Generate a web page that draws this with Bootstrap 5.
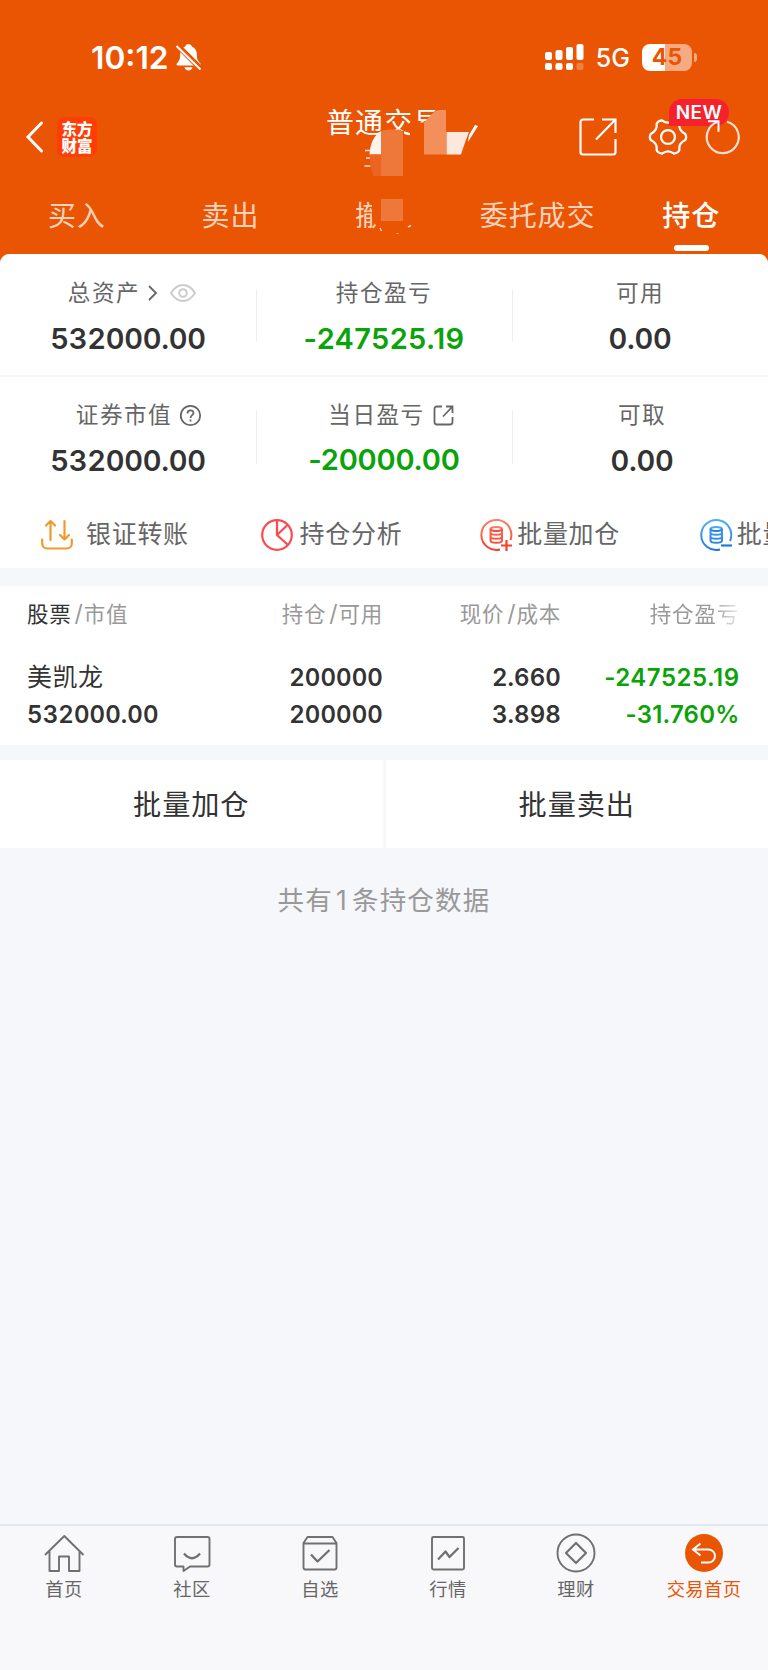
<!DOCTYPE html>
<html lang="zh-CN" data-bs-theme="light">
<head>
<meta charset="utf-8">
<meta name="viewport" content="width=device-width, initial-scale=1">
<title>持仓</title>
<link href="https://cdn.jsdelivr.net/npm/bootstrap@5.3.0/dist/css/bootstrap.min.css" rel="stylesheet">
<style>
:root{--brand:#ea5504;--page:#f6f7fa;--ink:#333;--sub:#666;--dim:#999;--down:#0aa30a}
body{font-family:Inter,"Noto Sans CJK SC",sans-serif;background:var(--page);color:var(--ink);width:768px;height:1670px;overflow:hidden}
svg{display:block;fill:none;flex:none;overflow:visible}
.app-head{background:var(--brand);height:263px;color:#fff}
.status-line{height:90px;padding:33px 71px 8px 91px}
.clock{font-size:31.7px;font-weight:600;line-height:34px;letter-spacing:0}
.net{font-size:25px;font-weight:500;line-height:30px}
.batt{width:50px;height:27px;border-radius:8px;background:linear-gradient(90deg,#fff 46%,#f6aa81 46%);color:var(--brand);font-size:23px;font-weight:700;line-height:27px}
.batt-cap{width:3px;height:9px;border-radius:0 4px 4px 0;background:#f6aa81;margin-left:2px}
.title-line{height:94px;padding:0 28px 0 26px}
.logo{width:40px;height:40px;border-radius:7px;background:#ff3d05;font:900 15.5px/17.5px "Noto Sans CJK SC",sans-serif;margin-left:14px}
.title-text{top:16px;left:326px;font-size:28px;line-height:34px;letter-spacing:1.1px;font-weight:400}
.new-tag{left:669px;top:9px;width:60px;height:27px;border-radius:13px 13px 13px 0;background:#f5222d;font-size:19px;font-weight:600;line-height:27px;letter-spacing:.4px}
.tab-line{height:69px}
.tab-line .nav-link{width:153.6px;padding:0;font-size:28px;line-height:64px;letter-spacing:.9px;color:#fbd3bd;text-align:center}
.tab-line .nav-link.active{color:#fff;font-weight:500}
.tab-line .active::after{content:"";position:absolute;left:60px;top:61px;width:35px;height:6px;border-radius:3px;background:#fff}
.sheet{margin-top:-9px;border-radius:9px 9px 0 0;background:#fff;height:314px}
.stat-row{height:121px;padding-top:22px}
.stat-row + .stat-row{border-top:2px solid #f6f6f8;height:122px;padding-top:21px}
.stat{width:256px;text-align:center}
.stat + .stat::before{content:"";position:absolute;left:0;top:13px;width:1px;height:53px;background:#eee}
.stat-name{height:34px;font-size:22.6px;line-height:34px;letter-spacing:1.5px;color:var(--sub)}
.stat-num{font-size:29px;font-weight:600;line-height:40px;margin-top:9px;font-variant-numeric:tabular-nums;letter-spacing:-.25px}
.stat-num.fall{font-variant-numeric:normal;letter-spacing:.35px}
.stat-row + .stat-row .fall{margin-top:8px;letter-spacing:-.2px}
.fall{color:var(--down)}
.quick{height:71px;padding:4px 0 0 41px;overflow:hidden;font-size:25px;letter-spacing:.7px;color:var(--sub)}
.quick-item{width:219.6px;flex:none}
.hold{background:#fff;height:159px;margin-top:18px;padding:12px 29px 0 27px}
.hold-grid{display:grid;grid-template-columns:178px 178px 178px 178px}
.hold-head{font-size:21.5px;line-height:32px;letter-spacing:.8px;color:var(--dim);margin-bottom:29px}
.hold-head span{white-space:nowrap}
.hold-head i{font-style:normal;font-size:23px;margin:0 0 0 3px}
.fade-end{-webkit-mask-image:linear-gradient(90deg,#000 85%,rgba(0,0,0,.2));mask-image:linear-gradient(90deg,#000 85%,rgba(0,0,0,.2))}
.hold-num{font-size:24px;font-weight:600;line-height:37.2px;letter-spacing:.1px;font-variant-numeric:tabular-nums}
.hold-num .fall{font-variant-numeric:normal;letter-spacing:.5px;margin-right:-.5px}
.hold-num .fall:last-child{letter-spacing:.2px}
.hold-name{font-size:25px;font-weight:400;letter-spacing:.5px}
.bulk{height:88px;margin-top:15px;gap:3px}
.bulk .btn{background:#fff;border:0;border-radius:0;font-size:28.2px;letter-spacing:.9px;color:var(--ink);padding-top:9px}
.total{font-size:26.5px;line-height:40px;letter-spacing:1.2px;color:var(--dim);margin-top:32px}
.total span{margin:0 4px 0 3px}
.dock{height:146px;border-top:2px solid #e5e7ea;background:#f8f8fb}
.dock .nav-link{width:128px;padding:8px 0 0;color:var(--sub);font-size:18.3px;line-height:26px;letter-spacing:.4px}
.dock .nav-link.active{color:var(--brand)}
.dock svg{margin:0 auto 2px}
</style>
</head>
<body class="d-flex flex-column">
<header class="app-head position-relative">
  <div class="status-line d-flex align-items-center">
    <span class="clock">10:12</span>
    <svg width="26" height="27" viewBox="0 0 26 27" style="margin-left:7px">
      <path fill="#fff" d="M12.500 0c1.700 0 3 1 3.300 2.400 3.200 1.200 5 4 5 7.600 0 5 .8 6.500 3.400 9.300.9 1 .5 2.200-.9 2.200H2c-1.500 0-1.900-1.200-1-2.200C3.400 16.800 4.200 15 4.200 10c0-3.600 1.800-6.400 5-7.600C9.500 1 10.800 0 12.500 0ZM8.500 23.300h8c-.3 2-2 3.200-4 3.200s-3.700-1.200-4-3.200Z"/>
      <path stroke="#ea5504" stroke-width="5.500" d="M0 0 26 26"/><path stroke="#fff" stroke-width="2" d="M.5 2 24.500 25.500"/>
    </svg>
    <div class="ms-auto d-flex align-items-center">
      <svg width="39" height="27" viewBox="0 0 39 27">
        <g fill="#fff"><rect y="8" width="7" height="8" rx="2"/><rect x="10.500" y="6" width="7" height="10" rx="2"/><rect x="21" y="3" width="7" height="13" rx="2"/><rect x="31.500" width="7" height="16" rx="2"/><rect y="19" width="7" height="7" rx="2"/><rect x="10.500" y="19" width="7" height="7" rx="2"/><rect x="21" y="19" width="7" height="7" rx="2"/><rect x="31.500" y="19" width="7" height="7" rx="2" opacity=".25"/></g>
      </svg>
      <span class="net ms-2 ps-1 me-2 pe-1">5G</span>
      <span class="batt text-center">45</span><span class="batt-cap"></span>
    </div>
  </div>
  <div class="title-line d-flex align-items-center position-relative">
    <svg width="17" height="30" viewBox="0 0 17 30"><path d="M15.500 1 2 15l13.500 14" stroke="#fff" stroke-width="3" stroke-linecap="round"/></svg>
    <div class="logo d-flex align-items-center justify-content-center text-center">东方<br>财富</div>
    <div class="title-text position-absolute">普通交易</div>
    <svg class="ms-auto" width="38" height="38" viewBox="0 0 38 38"><path d="M15 1.500H4A2.500 2.500 0 0 0 1.500 4v30A2.500 2.500 0 0 0 4 36.500h30a2.500 2.500 0 0 0 2.500-2.500V21M23 1.500h13.500V15M36 2 17 21.500" stroke="#fff" stroke-width="2.200"/></svg>
    <svg width="38" height="38" viewBox="-20.500 -20.500 41 41" style="margin-left:31.500px"><path stroke="#fff" stroke-width="2.400" stroke-linejoin="round" d="M18.700 3.300Q11.300 6.500 12.200 14.600 10.250 17.750 6.500 17.900 0 13-6.500 17.900-10.250 17.750-12.200 14.600-11.300 6.500-18.700 3.300-20.500 0-18.700-3.300-11.300-6.500-12.200-14.600-10.250-17.750-6.500-17.900 0-13 6.500-17.900 10.250-17.750 12.200-14.600 11.300-6.500 18.700-3.300 20.500 0 18.700 3.300Z"/><circle r="7.500" stroke="#fff" stroke-width="2.400"/></svg>
    <span class="new-tag position-absolute text-center">NEW</span>
    <svg class="position-relative" width="35" height="36" viewBox="0 0 35 36" style="margin-left:18.500px"><path d="M22 2.700A16 16 0 1 1 12.500 3" stroke="#fde0d0" stroke-width="2.200"/><path d="M3 2.300h10.500v10.500" stroke="#fff" stroke-width="2"/></svg>
  </div>
  <nav class="nav tab-line flex-nowrap">
    <a class="nav-link">买入</a><a class="nav-link">卖出</a><a class="nav-link">撤单</a><a class="nav-link">委托成交</a><a class="nav-link active position-relative">持仓</a>
  </nav>
  <!-- mosaic privacy mask -->
  <svg class="position-absolute" style="left:320px;top:95px" width="170" height="140" viewBox="0 0 170 140">
    <g fill="#ea5504"><path d="M90 27.500h15L116.500 14V10H128v34H90Z"/><path d="M61 36h23v46H61Z"/><path d="M52 100h47v42H61l-9-20Z"/></g>
    <path d="M45 55.500h6M46 63h4M44.500 71h6" stroke="#fde3d6" stroke-width="1.500"/>
    <path fill="#fdf3ee" d="M61 36v23.500H49.500C50 49 54 40 61 36Z"/>
    <path fill="#ec6421" d="M49.500 59.500H61V81h-8q-3-10-3.500-21.500Z"/>
    <path fill="#ee7839" d="M61 36q5-2 10-1.500h8q4 .5 4 4V81H61Z"/>
    <path fill="#f28f5b" d="M126 15v44.500h-22V27.500L113 18q3-3 6-3Z"/>
    <path fill="#fde8de" d="M126.500 37H149q-4 10-8 22.500h-14.500Z"/>
    <path fill="#fff" d="m155 30 3 1-10 16 1-7Z"/>
    <path fill="#ee7839" d="M61 104h22v22H61Z"/>
    <path d="M60 133l1.500 3M88 132l3-1.500" stroke="#fbd3bd" stroke-width="1.500"/>
    <path d="M76 138.500h3" stroke="#f19262" stroke-width="1"/>
  </svg>
</header>

<main class="flex-grow-1">
  <section class="sheet position-relative">
    <div class="stat-row d-flex">
      <div class="stat position-relative">
        <div class="stat-name d-flex align-items-center justify-content-center ps-2">总资产
          <svg class="ms-2" width="9" height="16" viewBox="0 0 9 16"><path d="m1 1 7 7-7 7" stroke="#666" stroke-width="1.800"/></svg>
          <svg style="margin-left:13px" width="26" height="18" viewBox="0 0 26 18"><path d="M1 9Q6 1 13 1t12 8q-5 8-12 8T1 9Z" stroke="#ccc" stroke-width="2"/><circle cx="13" cy="9" r="3.800" stroke="#ccc" stroke-width="2"/></svg>
        </div>
        <div class="stat-num">532000.00</div>
      </div>
      <div class="stat position-relative"><div class="stat-name">持仓盈亏</div><div class="stat-num fall">-247525.19</div></div>
      <div class="stat position-relative"><div class="stat-name">可用</div><div class="stat-num">0.00</div></div>
    </div>
    <div class="stat-row d-flex">
      <div class="stat position-relative">
        <div class="stat-name d-flex align-items-center justify-content-center" style="padding-left:21px">证券市值
          <svg class="ms-2" width="21" height="21" viewBox="0 0 21 21" stroke="#666" stroke-width="1.800"><circle cx="10.500" cy="10.500" r="9.700"/><path d="M7.500 8.500c0-4 6-4 6-.6 0 2.200-3 2.400-3 5M10.500 14.500v2"/></svg>
        </div>
        <div class="stat-num">532000.00</div>
      </div>
      <div class="stat position-relative">
        <div class="stat-name d-flex align-items-center justify-content-center" style="padding-left:14px">当日盈亏
          <svg class="ms-2" width="21" height="21" viewBox="0 0 21 21"><path d="M9 1.500H4A2.500 2.500 0 0 0 1.500 4v13A2.500 2.500 0 0 0 4 19.500h13a2.500 2.500 0 0 0 2.500-2.500v-5M13 1.500h6.500V8M19 2 10 11.500" stroke="#666" stroke-width="1.800"/></svg>
        </div>
        <div class="stat-num fall">-20000.00</div>
      </div>
      <div class="stat position-relative"><div class="stat-name ps-1">可取</div><div class="stat-num ps-1">0.00</div></div>
    </div>
    <div class="quick d-flex align-items-center">
      <div class="quick-item d-flex align-items-center">
        <svg width="32" height="32" viewBox="0 0 32 32" stroke="#f19a2c" stroke-width="2.200" stroke-linecap="round" stroke-linejoin="round"><path d="M9.500 21V2M5 6.500 9.500 2 14 6.500M23.500 2v18.500M19 16l4.500 4.500L28 16M1.200 20.500v4a5 5 0 0 0 5 5h19.600a5 5 0 0 0 5-5v-4"/></svg>
        <span style="margin-left:13px">银证转账</span>
      </div>
      <div class="quick-item d-flex align-items-center">
        <svg width="32" height="32" viewBox="0 0 32 32" stroke="#fb4b51" stroke-width="2.200"><circle cx="16" cy="16" r="14.800"/><path d="M16 1v15l10.500 9.500M16 16 26.500 6"/></svg>
        <span style="margin-left:7px">持仓分析</span>
      </div>
      <div class="quick-item d-flex align-items-center">
        <svg width="32" height="32" viewBox="0 0 32 32"><defs><linearGradient id="warm" x1="0" y1="0" x2="0" y2="1"><stop stop-color="#ff8066"/><stop offset="1" stop-color="#f5402f"/></linearGradient></defs><g stroke="url(#warm)" stroke-width="2"><path d="M30.500 21A15 15 0 1 0 20 30.500M10.500 10v11.500c0 3 11.500 3 11.500 0V10M10.500 13.500c0 3 11.500 3 11.500 0M10.500 17.500c0 3 11.500 3 11.500 0"/><ellipse cx="16.250" cy="10" rx="5.750" ry="2"/></g><path d="M21 26.500h11M26.500 21v11" stroke="#f5402f" stroke-width="2.200"/></svg>
        <span style="margin-left:5px">批量加仓</span>
      </div>
      <div class="quick-item d-flex align-items-center">
        <svg width="32" height="32" viewBox="0 0 32 32"><defs><linearGradient id="cool" x1="0" y1="0" x2="0" y2="1"><stop stop-color="#4bb0f8"/><stop offset="1" stop-color="#2278df"/></linearGradient></defs><g stroke="url(#cool)" stroke-width="2"><path d="M30 22A15 15 0 1 0 20 30.500M10.500 10v11.500c0 3 11.500 3 11.500 0V10M10.500 13.500c0 3 11.500 3 11.500 0M10.500 17.500c0 3 11.500 3 11.500 0"/><ellipse cx="16.250" cy="10" rx="5.750" ry="2"/></g><path d="M21 26.500h11" stroke="#2278df" stroke-width="2.200"/></svg>
        <span class="text-nowrap" style="margin-left:5px">批量卖出</span>
      </div>
    </div>
  </section>

  <section class="hold">
    <div class="hold-grid hold-head text-end">
      <span class="text-start"><span style="color:#333">股票</span><i>/</i>市值</span><span>持仓<i>/</i>可用</span><span>现价<i>/</i>成本</span><span class="fade-end">持仓盈亏</span>
    </div>
    <div class="hold-grid hold-num text-end">
      <span class="text-start hold-name">美凯龙</span><span>200000</span><span>2.660</span><span class="fall">-247525.19</span>
      <span class="text-start">532000.00</span><span>200000</span><span>3.898</span><span class="fall">-31.760%</span>
    </div>
  </section>

  <div class="bulk d-flex">
    <button class="btn flex-fill w-50">批量加仓</button><button class="btn flex-fill w-50">批量卖出</button>
  </div>
  <p class="total text-center mb-0">共有<span>1</span>条持仓数据</p>
</main>

<nav class="dock nav flex-nowrap text-center">
  <a class="nav-link"><svg width="40" height="40" viewBox="0 0 40 40" stroke="#707070" stroke-width="1.900" stroke-linejoin="round"><path d="M1 21 20.300 2 39.500 21M5.500 17v20H15V22.500h10V37h10.500V17"/></svg>首页</a>
  <a class="nav-link"><svg width="40" height="40" viewBox="0 0 40 40" stroke="#707070" stroke-width="1.900" stroke-linejoin="round"><path d="M5 3h30.500a2 2 0 0 1 2 2v25.500a2 2 0 0 1-2 2H18L11.500 37v-4.500H5a2 2 0 0 1-2-2V5a2 2 0 0 1 2-2Z"/><path d="M12 19.500q8 9.500 16 0" stroke-width="2.300"/></svg>社区</a>
  <a class="nav-link"><svg width="40" height="40" viewBox="0 0 40 40" stroke="#707070" stroke-width="1.900" stroke-linejoin="round"><path d="M7.500 3h25l4 6v24.500a2 2 0 0 1-2 2h-29a2 2 0 0 1-2-2V9ZM3.500 9.500h33"/><path d="m11 20.500 6.500 7L29.500 16" stroke-width="2.300"/></svg>自选</a>
  <a class="nav-link"><svg width="40" height="40" viewBox="0 0 40 40" stroke="#707070" stroke-width="1.900" stroke-linejoin="round"><rect x="4" y="3" width="32" height="32.500" rx="1.500"/><path d="m10 25.500 7.500-8 4 5.500 9-9" stroke-width="2.300"/></svg>行情</a>
  <a class="nav-link"><svg width="40" height="40" viewBox="0 0 40 40" stroke="#707070" stroke-width="1.900" stroke-linejoin="round"><circle cx="20" cy="19" r="18.500"/><path d="m20 9 10 10-10 10L10 19Z" stroke-width="2.200"/></svg>理财</a>
  <a class="nav-link active"><svg width="40" height="40" viewBox="0 0 40 40"><circle cx="20" cy="19" r="19" fill="#ea5504"/><path d="M16.500 9.500 9 15.500l7.500 6M9.500 15.500h15a6.500 6.500 0 0 1 0 13H17" stroke="#fff" stroke-width="2"/></svg>交易首页</a>
</nav>
<script src="https://cdn.jsdelivr.net/npm/bootstrap@5.3.0/dist/js/bootstrap.bundle.min.js"></script>
</body>
</html>
